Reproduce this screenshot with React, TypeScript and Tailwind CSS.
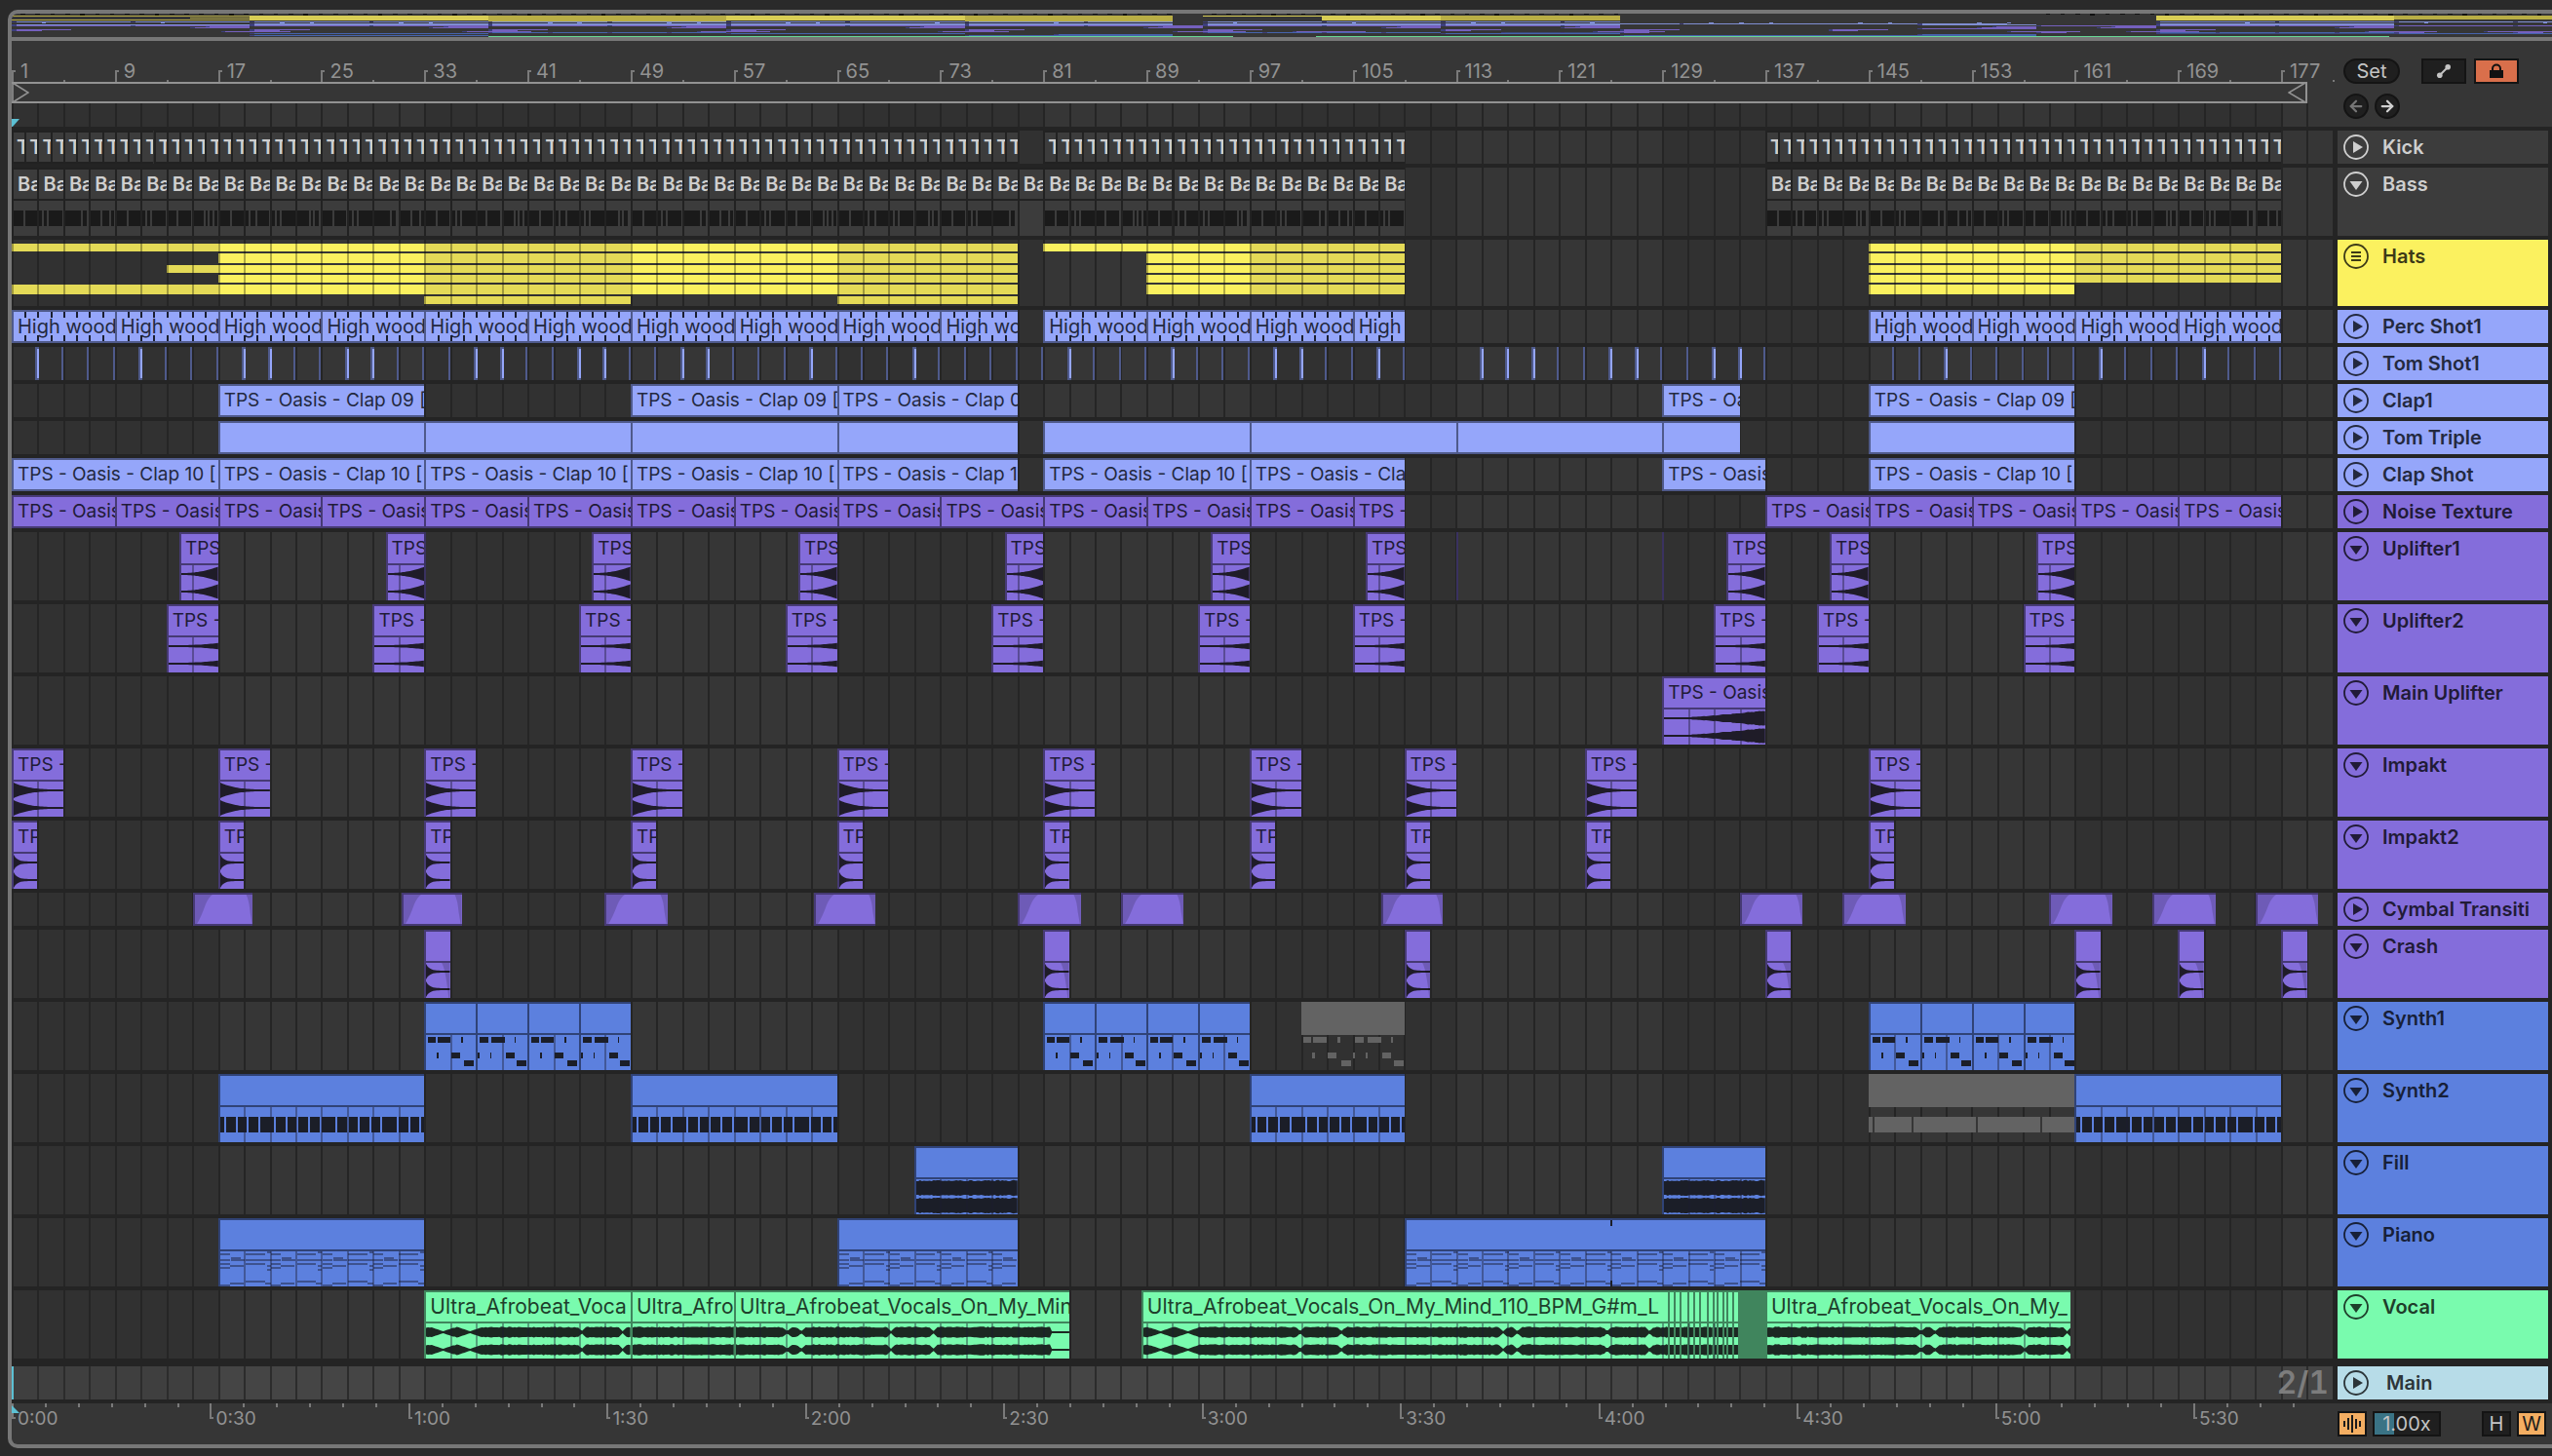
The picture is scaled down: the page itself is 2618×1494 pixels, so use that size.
import React from 'react';
import { ArrowLeft, ArrowRight } from 'lucide-react';

const TOTAL_BARS = 180;
const BAR_PX = 13.23;

type ThemeName = 'gray' | 'yellow' | 'peri' | 'purple' | 'blue' | 'green';
type BodyKind =
  | 'bass' | 'rise' | 'riseSoft' | 'swell' | 'decay' | 'decayFast' | 'crash'
  | 'synthA' | 'synthB' | 'pulse' | 'fill' | 'piano' | 'vocal';

interface ClipData {
  start: number;
  end: number;
  label?: string;
  muted?: boolean;
  solid?: boolean;
  offset?: number;
  marker?: number;
  body?: BodyKind;
}

interface TrackData {
  name: string;
  theme: ThemeName;
  tall?: boolean;
  kind?: 'hats' | 'perc' | 'tom' | 'cymbal';
  body?: BodyKind;
  clips: ClipData[];
  overviewRow: number;
}

const themes: Record<ThemeName, { fill: string; edge: string; text: string; label: string; hex: string; wave: string }> = {
  gray: { fill: 'bg-[#3c3c3c]', edge: 'bg-[#222222]', text: 'text-[#cfcfcf]', label: 'text-[20px] font-semibold', hex: '#1a1a1a', wave: '#1a1a1a' },
  yellow: { fill: 'bg-[#fbf15f]', edge: 'bg-[#8a8437]', text: 'text-[#3d3a17]', label: 'pl-1 text-[19px]', hex: '#d5c94f', wave: '#222222' },
  peri: { fill: 'bg-[#95a6fa]', edge: 'bg-[#4f5a8b]', text: 'text-[#23293f]', label: 'pl-1 text-[19px]', hex: '#7f8ed2', wave: '#1c1e28' },
  purple: { fill: 'bg-[#846ddb]', edge: 'bg-[#463a74]', text: 'text-[#211b37]', label: 'pl-1 text-[19px]', hex: '#7560be', wave: '#1f1c28' },
  blue: { fill: 'bg-[#5c80de]', edge: 'bg-[#304377]', text: 'text-[#172038]', label: 'pl-1 text-[19px]', hex: '#4664ad', wave: '#1b1e28' },
  green: { fill: 'bg-[#79fbae]', edge: 'bg-[#40855d]', text: 'text-[#1e3f2b]', label: 'pl-1 text-[21px]', hex: '#68d896', wave: '#1c2822' },
};

const run = (from: number, to: number, step: number, label?: string): ClipData[] => {
  const out: ClipData[] = [];
  for (let b = from; b < to; b += step) out.push({ start: b, end: Math.min(b + step, to), label });
  return out;
};

const spans = (list: number[][], label?: string): ClipData[] =>
  list.map(([start, end]) => ({ start, end, label }));

const CLAP9 = 'TPS - Oasis - Clap 09 [';
const CLAP10 = 'TPS - Oasis - Clap 10 [';
const OASIS = 'TPS - Oasis';
const VOX = 'Ultra_Afrobeat_Vocals_';
const IMPACTS = [1, 17, 33, 49, 65, 81, 97, 109, 123, 145];
const SLICES = [129.47, 129.92, 130.37, 130.98, 131.43, 131.88, 132.5, 132.94, 133.24, 133.7, 134, 134.45, 134.9];

const tracks: TrackData[] = [
  { name: 'Kick', theme: 'gray', overviewRow: 0, clips: [...run(1, 79, 1, 'T'), ...run(81, 109, 1, 'T'), ...run(137, 177, 1, 'T')] },
  { name: 'Bass', theme: 'gray', tall: true, body: 'bass', overviewRow: 1, clips: [...run(1, 109, 2, 'Ba'), ...run(137, 177, 2, 'Ba')] },
  { name: 'Hats', theme: 'yellow', tall: true, kind: 'hats', overviewRow: 2, clips: [] },
  { name: 'Perc Shot1', theme: 'peri', kind: 'perc', overviewRow: 8, clips: [...run(1, 79, 8, 'High wood'), ...run(81, 109, 8, 'High wood'), ...run(145, 177, 8, 'High wood')] },
  { name: 'Tom Shot1', theme: 'peri', kind: 'tom', overviewRow: 9, clips: [] },
  { name: 'Clap1', theme: 'peri', overviewRow: 10, clips: spans([[17, 33], [49, 65], [65, 79], [129, 135], [145, 161]], CLAP9) },
  { name: 'Tom Triple', theme: 'peri', overviewRow: 10, clips: [...run(17, 79, 16), ...run(81, 135, 16), ...run(145, 161, 16)] },
  { name: 'Clap Shot', theme: 'peri', overviewRow: 11, clips: [...run(1, 79, 16, CLAP10), ...run(81, 109, 16, CLAP10), ...spans([[129, 137], [145, 161]], CLAP10)] },
  { name: 'Noise Texture', theme: 'purple', overviewRow: 12, clips: [...run(1, 109, 8, OASIS), ...run(137, 177, 8, OASIS)] },
  {
    name: 'Uplifter1', theme: 'purple', tall: true, body: 'rise', overviewRow: 13,
    clips: [17, 33, 49, 65, 81, 97, 109, 137, 145, 161].map((end) => ({ start: end - 3, end, label: 'TPS' })),
  },
  {
    name: 'Uplifter2', theme: 'purple', tall: true, body: 'riseSoft', overviewRow: 14,
    clips: [17, 33, 49, 65, 81, 97, 109, 137, 145, 161].map((end) => ({ start: end - 4, end, label: 'TPS -' })),
  },
  { name: 'Main Uplifter', theme: 'purple', tall: true, body: 'swell', overviewRow: 15, clips: [{ start: 129, end: 137, label: OASIS }] },
  { name: 'Impakt', theme: 'purple', tall: true, body: 'decay', overviewRow: 16, clips: IMPACTS.map((b) => ({ start: b, end: b + 4, label: 'TPS -' })) },
  { name: 'Impakt2', theme: 'purple', tall: true, body: 'decayFast', overviewRow: 17, clips: IMPACTS.map((b) => ({ start: b, end: b + 2, label: 'TP' })) },
  {
    name: 'Cymbal Transiti', theme: 'purple', kind: 'cymbal', overviewRow: 18,
    clips: spans([[15.05, 19.7], [31.25, 35.9], [47, 51.9], [63.2, 68], [79, 83.9], [87, 91.9], [107.2, 112], [135, 139.9], [143, 147.9], [159, 163.9], [167, 171.9], [175, 179.9]]),
  },
  { name: 'Crash', theme: 'purple', tall: true, body: 'crash', overviewRow: 19, clips: [33, 81, 109, 137, 161, 169, 177].map((b) => ({ start: b, end: b + 2 })) },
  {
    name: 'Synth1', theme: 'blue', tall: true, overviewRow: 19,
    clips: [33, 37, 41, 45, 81, 85, 89, 93, 101, 105, 145, 149, 153, 157].map((b, i) => ({
      start: b, end: b + 4, muted: b === 101 || b === 105, body: i % 2 ? 'synthB' : 'synthA',
    })),
  },
  {
    name: 'Synth2', theme: 'blue', tall: true, body: 'pulse', overviewRow: 20,
    clips: [...spans([[17, 33], [49, 65], [97, 109]]), { start: 145, end: 161, muted: true }, { start: 161, end: 177 }],
  },
  { name: 'Fill', theme: 'blue', tall: true, body: 'fill', overviewRow: 21, clips: spans([[71, 79], [129, 137]]) },
  { name: 'Piano', theme: 'blue', tall: true, body: 'piano', overviewRow: 22, clips: [...spans([[17, 33], [65, 79]]), { start: 109, end: 137, marker: 125 }] },
  {
    name: 'Vocal', theme: 'green', tall: true, body: 'vocal', overviewRow: 23,
    clips: [
      { start: 33, end: 49, label: 'Ultra_Afrobeat_Voca', offset: 0 },
      { start: 49, end: 57, label: 'Ultra_Afro', offset: 16 },
      { start: 57, end: 83, label: `${VOX}On_My_Min`, offset: 24 },
      { start: 88.6, end: 129.47, label: `${VOX}On_My_Mind_110_BPM_G#m_L`, offset: 0 },
      ...SLICES.map((s, i) => ({ start: s, end: SLICES[i + 1] ?? 137, offset: 6, solid: i === SLICES.length - 1 })),
      { start: 137, end: 160.7, label: `${VOX}On_My_`, offset: 16 },
    ],
  },
];

// [from, to, rows, bright]
const hatSegments: [number, number, number[], boolean][] = [
  [1, 17, [0, 4], false],
  [13, 17, [2], false],
  [17, 33, [0, 1, 2, 3, 4], true],
  [33, 49, [0, 1, 2, 3, 4, 5], false],
  [49, 65, [0, 1, 2, 3, 4], true],
  [65, 79, [0, 1, 2, 3, 4, 5], false],
  [81, 89, [0], true],
  [89, 97, [0, 1, 2, 3, 4], true],
  [97, 109, [0, 1, 2, 3, 4], false],
  [145, 161, [0, 1, 2, 3, 4], true],
  [161, 177, [0, 1, 2, 3], false],
];
const hatRows = ['top-1 h-2', 'top-[14px] h-2.5', 'top-[26px] h-2', 'top-9 h-2', 'top-[46px] h-2.5', 'top-[58px] h-2'];

const tomHits = [3, 11, 19, 21, 27, 29, 37, 39, 45, 47, 53, 55, 63, 71, 83, 91, 99, 101, 107, 115, 117, 119, 125, 127, 133, 135, 151, 163, 171];
const tomMarks = Array.from({ length: 88 }, (_, i) => 3 + i * 2).filter((b) => b <= 109 || (b >= 115 && b <= 137) || (b >= 147 && b <= 177));

const pct = (bars: number) => `${(bars / TOTAL_BARS) * 100}%`;
const noise = (n: number) => {
  const v = Math.sin(n * 12.9898) * 43758.5453;
  return v - Math.floor(v);
};

const pinches = [[1.35, 0.9], [3.45, 0.9], [12.2, 0.3], [15.4, 0.3], [28, 0.35], [29.1, 0.35], [36.1, 0.3], [39.4, 0.3]];

function envelope(kind: BodyKind, t: number, bar: number) {
  switch (kind) {
    case 'rise':
      return 1 + 6.5 * t ** 2.2;
    case 'riseSoft':
      return 1 + 2.3 * t ** 3;
    case 'swell':
      return t < 0.25 ? 1 : Math.min(6.8, 1 + 9 * (t - 0.25) ** 1.2) + noise(bar * 7) * t;
    case 'decay':
      return 1 + 7 * (1 - t) ** 3.4;
    case 'decayFast':
    case 'crash':
      return 1 + 7 * Math.exp(-7 * t);
    case 'fill':
      return 7 + noise(bar * 5) * 1.2;
    default: {
      let h = 4.6 + noise(bar * 9) * 1.2;
      for (const [at, w] of pinches) {
        const d = Math.abs(bar - at) / w;
        if (d < 1) h = Math.min(h, 1 + 4 * d);
      }
      return h;
    }
  }
}

function wavePath(kind: BodyKind, bars: number, offset: number) {
  const width = bars * BAR_PX;
  const steps = Math.max(3, Math.round(width / 2));
  let d = '';
  for (const mid of [9, 27]) {
    const top: string[] = [];
    const bottom: string[] = [];
    for (let i = 0; i <= steps; i++) {
      const t = i / steps;
      const bar = offset + t * bars;
      const flat = kind === 'vocal' && offset === 24 && bar > 48.6;
      const h = flat ? 1 : envelope(kind, t, bar);
      const x = (t * width).toFixed(1);
      top.push(`${x} ${(mid - h).toFixed(1)}`);
      bottom.unshift(`${x} ${(mid + h).toFixed(1)}`);
    }
    d += `M${top.join('L')}L${bottom.join('L')}Z`;
  }
  return d;
}

type Rect = [number, number, number, number];

const bassSlits = [[11], [3, 9], [17, 24], [11, 21], [11], [3, 9], [9, 25], [11, 15, 21], [11], [3, 11], [3, 9], [13, 17, 24]];
const synthNotes: Record<string, Rect[]> = {
  synthA: [[2, 2, 8, 6], [12, 2, 14, 6], [37, 2, 3, 6], [11, 18, 3, 6], [27, 18, 9, 6], [41, 26, 10, 6]],
  synthB: [[2, 2, 9, 6], [15, 2, 14, 6], [39, 2, 2, 6], [0, 18, 2, 6], [13, 18, 2, 6], [30, 18, 9, 6], [42, 26, 10, 6]],
};
const pianoA: Rect[] = [[0, 2, 10, 2], [0, 8, 10, 2], [11, 6, 10, 4], [21, 8, 4, 2], [0, 12, 10, 2], [0, 16, 10, 2], [10, 14, 14, 2], [10, 32, 14, 2], [0, 34, 10, 2]];
const pianoB: Rect[] = [[22, 0, 4, 2], [0, 2, 20, 2], [0, 8, 26, 2], [0, 12, 20, 2], [22, 14, 4, 2], [22, 18, 4, 2], [0, 30, 20, 2], [20, 32, 6, 2]];

function bodyRects(kind: BodyKind, clip: ClipData): Rect[] {
  const width = (clip.end - clip.start) * BAR_PX;
  const rects: Rect[] = [];
  if (kind === 'bass') {
    if (clip.start === 79) return [];
    const slits = bassSlits[((clip.start - 1) / 2) % bassSlits.length];
    let x = 0;
    for (const s of slits) {
      rects.push([x, 10, s - x, 16]);
      x = s + 2;
    }
    rects.push([x, 10, width - x, 16]);
  } else if (kind === 'pulse') {
    const step = clip.muted ? 66 : 11.7;
    let x = 0;
    for (let i = 0; x < width; i++) {
      let w = step - 2;
      if (i === 0) w = 4;
      else if (clip.muted && i === 1) w = 38;
      else if (!clip.muted && i % 5 === 4) w = step + 3;
      rects.push([x, 10, Math.min(w, width - x), 16]);
      x += w + 2;
    }
  } else if (kind === 'piano') {
    for (let b = 0; b < clip.end - clip.start; b += 2) {
      const cell = (b / 2) % 2 ? pianoB : pianoA;
      cell.forEach(([x, y, w, h]) => rects.push([x + b * BAR_PX, y, w, h]));
    }
  } else {
    rects.push(...synthNotes[kind]);
  }
  return rects;
}

function ClipBody({ kind, clip, theme }: { kind: BodyKind; clip: ClipData; theme: ThemeName }) {
  const bars = clip.end - clip.start;
  const width = bars * BAR_PX;
  const isWave = !['bass', 'pulse', 'piano', 'synthA', 'synthB'].includes(kind);
  let color = themes[theme].wave;
  if (clip.muted) color = '#636363';
  if (kind === 'piano') color = '#3d528f';

  return (
    <svg className="block h-full w-full" viewBox={`0 0 ${width} 36`} preserveAspectRatio="none" aria-hidden="true">
      {isWave ? (
        <path d={wavePath(kind, bars, clip.offset ?? 0)} fill={color} />
      ) : (
        bodyRects(kind, clip).map(([x, y, w, h], i) => (
          <rect key={i} x={x} y={y} width={w} height={h} fill={color} shapeRendering="crispEdges" />
        ))
      )}
      {kind === 'crash' && <path d={`M${width * 0.66} 0Q${width * 0.82} 6 ${width * 0.95} 36H${width}V0Z`} fill="#000" fillOpacity="0.16" />}
    </svg>
  );
}

function BarLines({ start, end }: { start: number; end: number }) {
  const lines: number[] = [];
  for (let b = Math.floor(start) + 1; b < end; b++) if (b % 2 === 1) lines.push(b);
  return (
    <>
      {lines.map((b) => (
        <span
          key={b}
          className="absolute bottom-0 h-9 w-0.5 bg-[#1c1c30]/40"
          style={{ left: `${((b - start) / (end - start)) * 100}%` }}
        />
      ))}
    </>
  );
}

function Clip({ clip, track }: { clip: ClipData; track: TrackData }) {
  const theme = themes[track.theme];
  const kind = clip.body ?? track.body;
  const bars = clip.end - clip.start;
  const style = { left: pct(clip.start - 1), width: pct(bars) };
  let label = theme.label;
  if (track.kind === 'perc') label = 'pl-1 text-[20px]';
  if (track.theme === 'gray') label += track.tall ? ' pl-1' : ' pl-[3px]';

  if (clip.muted) {
    return (
      <div className="absolute inset-y-0 overflow-hidden" style={style}>
        <div className="h-[34px] bg-[#636363]" />
        <div className="h-9">{kind && <ClipBody kind={kind} clip={clip} theme={track.theme} />}</div>
      </div>
    );
  }
  if (clip.solid) {
    return <div className={`absolute inset-y-0 ${theme.edge}`} style={style} />;
  }

  return (
    <div className={`absolute inset-y-0 overflow-hidden pt-0.5 pl-0.5 ${theme.edge}`} style={style}>
      <div className={`relative h-[30px] overflow-hidden whitespace-nowrap leading-[30px] ${label} ${theme.fill} ${theme.text}`}>
        {clip.label}
        {track.kind === 'cymbal' && (
          <svg className="absolute inset-0 h-full w-full" viewBox="0 0 60 30" preserveAspectRatio="none" aria-hidden="true">
            <path d="M0 0H18Q14 3 11 10Q6 24 2 30H0ZM53 0Q56 6 57 18L59 30H60V0Z" fill="#000" fillOpacity="0.16" />
          </svg>
        )}
      </div>
      {kind && (
        <div className={`mt-0.5 h-9 ${theme.fill}`}>
          <ClipBody kind={kind} clip={clip} theme={track.theme} />
        </div>
      )}
      {kind && <BarLines start={clip.start} end={clip.end} />}
      {track.kind === 'perc' &&
        Array.from({ length: Math.ceil(bars) - 1 }, (_, i) => (
          <React.Fragment key={i}>
            <span className="absolute top-0.5 h-1.5 w-0.5 bg-[#1b1f30]" style={{ left: `${((i + 1) / bars) * 100}%` }} />
            <span className="absolute bottom-0.5 h-1.5 w-0.5 bg-[#1b1f30]" style={{ left: `${((i + 1) / bars) * 100}%` }} />
          </React.Fragment>
        ))}
      {clip.marker && (
        <>
          <span className="absolute top-0.5 h-1.5 w-0.5 bg-[#1b1e28]" style={{ left: `${((clip.marker - clip.start) / bars) * 100}%` }} />
          <span className="absolute bottom-0 h-1.5 w-0.5 bg-[#1b1e28]" style={{ left: `${((clip.marker - clip.start) / bars) * 100}%` }} />
        </>
      )}
    </div>
  );
}

function Grid({ light = false }: { light?: boolean }) {
  return (
    <div className="absolute inset-0 flex" aria-hidden="true">
      {Array.from({ length: 90 }, (_, i) => {
        const odd = Math.floor(i / 8) % 2 === 1;
        const fill = light ? (odd ? 'bg-[#454545]' : 'bg-[#3f3f3f]') : odd ? 'bg-[#363636]' : 'bg-[#313131]';
        return <div key={i} className={`min-w-0 flex-1 border-l-2 ${light ? 'border-[#2c2c2c]' : 'border-[#252525]'} ${fill}`} />;
      })}
    </div>
  );
}

function HatsLane() {
  return (
    <>
      {hatSegments.map(([from, to, rows, bright]) =>
        rows.map((r) => (
          <div
            key={`${from}-${r}`}
            className={`absolute overflow-hidden ${hatRows[r]} ${bright ? 'bg-[#fbf15f]' : 'bg-[#e4da57]'}`}
            style={{ left: pct(from - 1), width: pct(to - from) }}
          >
            {Array.from({ length: Math.ceil((to - from) / 2) }, (_, i) => (
              <span key={i} className="absolute inset-y-0 w-0.5 bg-black/30" style={{ left: `${((i * 2) / (to - from)) * 100}%` }} />
            ))}
          </div>
        )),
      )}
    </>
  );
}

function TomLane() {
  return (
    <>
      {tomMarks.map((b) => (
        <span key={b} className="absolute inset-y-0 -ml-0.5 w-0.5 bg-[#4f5a8b]" style={{ left: pct(b - 1) }} />
      ))}
      {tomHits.map((b) => (
        <span key={b} className="absolute inset-y-0 -ml-0.5 w-1 bg-[#4f5a8b] py-0.5 pl-0.5" style={{ left: pct(b - 1) }}>
          <span className="block h-full bg-[#95a6fa]" />
        </span>
      ))}
    </>
  );
}

function FoldIcon({ kind }: { kind: 'closed' | 'open' | 'group' }) {
  return (
    <svg className="block size-[26px]" viewBox="0 0 26 26" fill="none" aria-hidden="true">
      <circle cx="13" cy="13" r="12" stroke="currentColor" strokeWidth="1.8" />
      {kind === 'closed' && <path d="M10 7L20 13L10 19Z" fill="currentColor" />}
      {kind === 'open' && <path d="M6.5 10H19.5L13 19Z" fill="currentColor" />}
      {kind === 'group' && <path d="M8 9H18M8 13H18M8 17H18" stroke="currentColor" strokeWidth="2" />}
    </svg>
  );
}

function TrackHeader({ track }: { track: TrackData }) {
  const theme = themes[track.theme];
  const icon = track.kind === 'hats' ? 'group' : track.tall ? 'open' : 'closed';
  return (
    <div className={`mx-1 flex w-[216px] shrink-0 items-start overflow-hidden pt-1 pl-1.5 ${theme.fill} ${theme.text}`}>
      <button type="button" className="shrink-0" aria-label={`Fold ${track.name}`}>
        <FoldIcon kind={icon} />
      </button>
      <span className="ml-3.5 whitespace-nowrap text-[20px] leading-[26px] font-semibold">{track.name}</span>
    </div>
  );
}

function TrackRow({ track }: { track: TrackData }) {
  const height = track.kind === 'hats' ? 'h-[68px]' : track.tall ? 'h-[70px]' : 'h-[34px]';
  return (
    <div className={`flex ${height}`}>
      <div className="relative min-w-0 flex-1 overflow-hidden border-r border-[#252525]">
        <Grid />
        {track.kind === 'hats' && <HatsLane />}
        {track.kind === 'tom' && <TomLane />}
        {track.name === 'Uplifter1' &&
          [33, 113, 129].map((b) => <span key={b} className="absolute inset-y-0 w-0.5 bg-[#3a3260]" style={{ left: pct(b - 1) }} />)}
        {track.clips.map((clip) => (
          <Clip key={clip.start} clip={clip} track={track} />
        ))}
      </div>
      <TrackHeader track={track} />
    </div>
  );
}

function Overview() {
  return (
    <svg className="block h-6 w-full" viewBox="0 0 170.6 24" preserveAspectRatio="none" shapeRendering="crispEdges" aria-hidden="true">
      {tracks
        .filter((t) => t.overviewRow > 1)
        .flatMap((t) =>
          t.clips.map((c) => (
            <React.Fragment key={`${t.name}-${c.start}`}>
              <rect x={c.start - 1} y={t.overviewRow} width={c.end - c.start} height={1} fill={c.muted ? '#3a4a78' : themes[t.theme].hex} />
              {t.theme !== 'green' && <rect x={c.start - 1} y={t.overviewRow} width={0.3} height={1} fill="#3d3f7c" />}
            </React.Fragment>
          )),
        )}
      {hatSegments.flatMap(([from, to, rows, bright]) =>
        rows.map((r) => (
          <rect key={`h${from}-${r}`} x={from - 1} y={2 + r} width={to - from} height={1} fill={bright ? '#d8cd55' : '#b9ae45'} />
        )),
      )}
      {tracks[0].clips.map((c) => (
        <rect key={c.start} x={c.start - 0.4} y={0} width={0.3} height={c.start % 5 === 0 ? 2 : 1} fill="#111" />
      ))}
      {tomHits.map((b) => (
        <rect key={b} x={b - 1} y={9} width={0.3} height={1} fill="#7f8ed2" />
      ))}
    </svg>
  );
}

function BarRuler() {
  return (
    <div className="relative h-[42px]">
      {Array.from({ length: 46 }, (_, i) => 1 + i * 4).map((bar) =>
        bar % 8 === 1 && bar < 180 ? (
          <div key={bar} className="absolute bottom-0 flex h-3 items-end border-l-2 border-[#7a7a7a]" style={{ left: pct(bar - 1) }}>
            <span className="absolute top-0 left-0 h-0.5 w-0.5 bg-[#7a7a7a]" />
            <span className="pl-[7px] text-[20px] leading-[22px] text-[#929292]">{bar}</span>
          </div>
        ) : (
          <span key={bar} className="absolute bottom-0 h-0.5 w-0.5 bg-[#7a7a7a]" style={{ left: pct(bar - 1) }} />
        ),
      )}
    </div>
  );
}

function TimeRuler() {
  const ticks = Array.from({ length: 70 }, (_, i) => i);
  return (
    <div className="relative h-[42px] min-w-0 flex-1 overflow-hidden">
      {ticks.map((i) => {
        const left = pct((i * 15.375) / 6);
        if (i % 6) return <span key={i} className="absolute top-0 h-1 w-0.5 bg-[#7a7a7a]" style={{ left }} />;
        const half = i / 6;
        return (
          <div key={i} className="absolute top-0 h-4 border-l-2 border-[#7a7a7a]" style={{ left }}>
            <span className="absolute bottom-0 left-0 h-0.5 w-0.5 bg-[#7a7a7a]" />
            <span className="block pt-1.5 pl-1 text-[19px] leading-5 text-[#929292]">
              {`${Math.floor(half / 2)}:${half % 2 ? '30' : '00'}`}
            </span>
          </div>
        );
      })}
      <svg className="absolute top-0.5 left-0 h-2 w-2" viewBox="0 0 8 8" aria-hidden="true">
        <path d="M0 0L8 8H0Z" fill="#5cc0d3" />
      </svg>
    </div>
  );
}

function TopArea() {
  return (
    <div className="flex h-[88px]">
      <div className="min-w-0 flex-1">
        <BarRuler />
        <div className="flex h-[22px]">
          <div className="flex items-center justify-between border-y-2 border-r-2 border-[#929292]" style={{ width: pct(178) }}>
            <svg className="h-[22px] w-[18px]" viewBox="0 0 18 22" fill="none" stroke="#929292" strokeWidth="1.6" aria-hidden="true">
              <path d="M1 0V22M1 1L17 11L1 21" />
            </svg>
            <svg className="h-[22px] w-[18px]" viewBox="0 0 18 22" fill="none" stroke="#929292" strokeWidth="1.6" aria-hidden="true">
              <path d="M18 1L1 11L18 21" />
            </svg>
          </div>
        </div>
        <div className="relative h-6">
          <Grid />
          <svg className="absolute bottom-0 left-0 h-2 w-2" viewBox="0 0 8 8" aria-hidden="true">
            <path d="M0 0H8L1 8H0Z" fill="#5cc0d3" />
          </svg>
        </div>
      </div>
      <div className="flex w-[225px] shrink-0 flex-col gap-2.5 pt-[18px] pl-[11px]">
        <div className="flex">
          <button type="button" className="h-[26px] w-[58px] rounded-full border-2 border-[#141414] bg-[#1f1f1f] text-[20px] leading-[22px] text-[#c4c4c4]">
            Set
          </button>
          <button type="button" aria-label="Automation mode" className="ml-[22px] flex h-[26px] w-[46px] items-center justify-center border-2 border-[#141414] bg-[#1f1f1f]">
            <svg className="size-4" viewBox="0 0 16 16" aria-hidden="true">
              <path d="M3.5 12.5L12.5 3.5" stroke="#c4c4c4" strokeWidth="2" />
              <circle cx="3.8" cy="12.2" r="2.8" fill="#c4c4c4" />
              <circle cx="12.2" cy="3.8" r="2.8" fill="#c4c4c4" />
            </svg>
          </button>
          <button type="button" aria-label="Lock envelopes" className="ml-2 flex h-[26px] w-[46px] items-center justify-center border-2 border-[#141414] bg-[#d96f4b]">
            <svg className="size-4" viewBox="0 0 16 16" aria-hidden="true">
              <path d="M4 8V5.5A4 4 0 0 1 12 5.5V8" fill="none" stroke="#111" strokeWidth="2" />
              <path d="M1 7H15V15H1Z" fill="#111" />
            </svg>
          </button>
        </div>
        <div className="flex gap-1.5">
          <button type="button" aria-label="Previous locator" className="flex size-[26px] items-center justify-center rounded-full border-2 border-[#141414] bg-[#1f1f1f]">
            <ArrowLeft className="size-[18px] text-[#757575]" strokeWidth={3} />
          </button>
          <button type="button" aria-label="Next locator" className="flex size-[26px] items-center justify-center rounded-full border-2 border-[#141414] bg-[#1f1f1f]">
            <ArrowRight className="size-[18px] text-[#d0d0d0]" strokeWidth={3} />
          </button>
        </div>
      </div>
    </div>
  );
}

function MainRow() {
  return (
    <div className="mt-1 flex h-[34px]">
      <div className="relative min-w-0 flex-1 overflow-hidden border-r border-[#252525]">
        <Grid light />
        <span className="absolute inset-y-0 left-0 w-0.5 bg-[#5cc0d3]" />
        <span className="absolute inset-y-0 right-1 text-[32px] leading-[34px] font-semibold text-[#7d7d7d] tabular-nums">2/1</span>
      </div>
      <div className="mx-1 flex w-[216px] shrink-0 items-start bg-[#b7dce8] pt-1 pl-1.5 text-[#2c3539]">
        <button type="button" aria-label="Fold Main">
          <FoldIcon kind="closed" />
        </button>
        <span className="ml-[18px] text-[20px] leading-[26px] font-semibold">Main</span>
      </div>
    </div>
  );
}

function BottomControls() {
  return (
    <div className="mx-1 flex w-[216px] shrink-0 pt-2">
      <button type="button" aria-label="Show waveform" className="flex h-[26px] w-[30px] items-center justify-center border-2 border-[#141414] bg-[#f4ae62]">
        <svg className="h-5 w-5" viewBox="0 0 20 20" stroke="#1b1b1b" strokeWidth="2" aria-hidden="true">
          <path d="M2 7V13M6 4V16M10 1V19M14 5V15M18 7V13" />
        </svg>
      </button>
      <input
        aria-label="Playback speed"
        defaultValue="1.00x"
        className="ml-1.5 h-[26px] w-[70px] border-2 border-[#141414] bg-[linear-gradient(90deg,#3a7385_20px,#1f1f1f_20px)] text-center text-[20px] leading-[22px] text-[#c4c4c4]"
      />
      <button type="button" className="ml-auto h-[26px] w-[30px] border-2 border-[#141414] bg-[#1f1f1f] text-[20px] leading-[22px] text-[#c4c4c4]">
        H
      </button>
      <button type="button" className="mr-0.5 ml-1.5 h-[26px] w-[30px] border-2 border-[#141414] bg-[#f4ae62] text-[20px] leading-[22px] text-[#1b1b1b]">
        W
      </button>
    </div>
  );
}

const App: React.FC = () => {
  return (
    <div className="min-h-screen overflow-hidden bg-[#2a2a2a] pt-2.5 pb-2 pl-2 font-['Inter','Liberation_Sans',sans-serif]">
      <div className="overflow-hidden rounded-l-[10px] border-4 border-r-0 border-[#777777] bg-[#363636]">
        <div className="border-b-4 border-[#777777]">
          <Overview />
        </div>
        <TopArea />
        <div className="flex flex-col gap-1 bg-[#242424] py-1">
          {tracks.map((track) => (
            <TrackRow key={track.name} track={track} />
          ))}
          <MainRow />
        </div>
        <div className="flex">
          <TimeRuler />
          <BottomControls />
        </div>
      </div>
    </div>
  );
};

export default App;
